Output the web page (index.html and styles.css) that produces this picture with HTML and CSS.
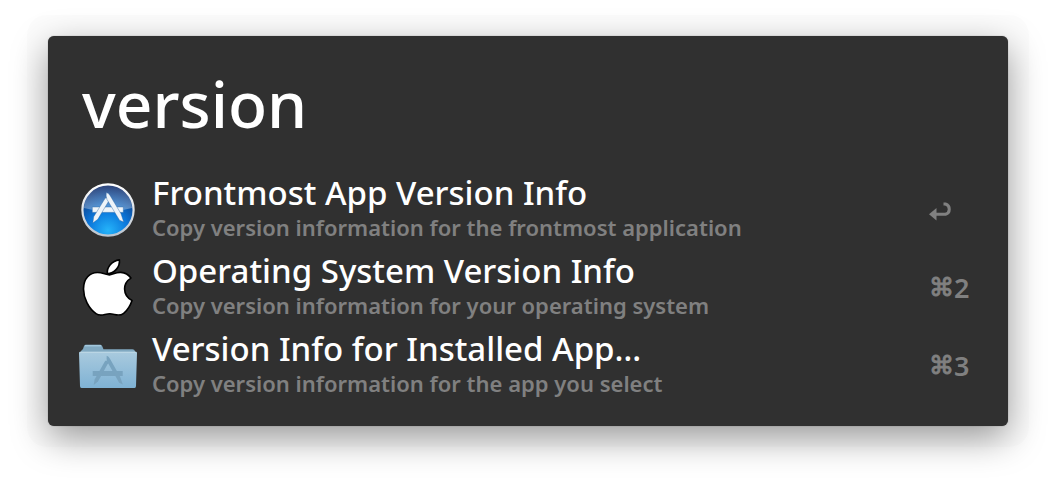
FILE: index.html
```html
<!DOCTYPE html>
<html lang="en">
<head>
<meta charset="utf-8">
<title>Launcher</title>
<link rel="stylesheet" href="styles.css">
</head>
<body>
<main class="launcher">
  <input class="query" type="text" value="version" aria-label="Search" spellcheck="false">
  <ul class="results">
    <li>
      <button class="result" type="button">
        <svg class="icon" viewBox="0 0 60 60" aria-hidden="true">
          <defs>
            <radialGradient id="blue" cx=".5" cy=".9" r=".85">
              <stop offset="0" stop-color="#25b4fa"/>
              <stop offset=".45" stop-color="#0b78dc"/>
              <stop offset="1" stop-color="#12306f"/>
            </radialGradient>
            <linearGradient id="gloss" x1="0" y1="0" x2="0" y2="1">
              <stop offset="0" stop-color="#fff" stop-opacity=".1"/>
              <stop offset="1" stop-color="#fff" stop-opacity=".34"/>
            </linearGradient>
            <linearGradient id="ring" x1="0" y1="0" x2="0" y2="1">
              <stop offset="0" stop-color="#fff"/>
              <stop offset="1" stop-color="#bcc5cf"/>
            </linearGradient>
          </defs>
          <circle cx="30" cy="30" r="25.6" fill="url(#blue)" stroke="url(#ring)" stroke-width="2.2"/>
          <path d="M6 28a24 24 0 0 1 48 0q-24 7-48 0z" fill="url(#gloss)"/>
          <g fill="#eef4f9" stroke="#23609f" stroke-width=".4">
            <path d="M14.300 27h31v5.400h-31z"/>
            <path d="M26.800 18.800q1-1.700 2.900-.7t1.200 2.700L19.800 39.300l-5 3.700.9-6.200z"/>
            <path d="M28.300 12.500q2.400.6 3.900 3.200l10.800 18.100 2.700 8.200-4.200-1.800-12.500-20.700q-1.400-3.500-.7-7z"/>
          </g>
        </svg>
        <span class="text">
          <span class="title">Frontmost App Version Info</span>
          <span class="subtitle">Copy version information for the frontmost application</span>
        </span>
        <kbd class="shortcut" aria-label="Return">
          <svg class="return" viewBox="0 0 24 22" aria-hidden="true">
            <path d="M6 15.300h10.500a5.400 5.400 0 0 0 0-10.300H14.500" fill="none" stroke="currentColor" stroke-width="3"/>
            <path d="M0 15.300l7.500-6.200v12.400z" fill="currentColor"/>
          </svg>
        </kbd>
      </button>
    </li>
    <li>
      <button class="result" type="button">
        <svg class="icon" viewBox="0 0 60 60" aria-hidden="true">
          <g transform="translate(.8 .8) scale(1.02)" fill="#fff" stroke="#000" stroke-width="1.6" stroke-linejoin="round">
            <path d="M30 15.700c3 0 6.200-2.800 11.200-2.400 4.200.3 7.700 2.400 9.900 5.600-4 2.500-6.300 6.200-6.200 10.800.1 5.300 2.700 9 7.300 11.100-1.700 5-4.700 9.800-8.200 12.600-4.800 3.800-8.700.5-13.600.5s-8.800 3.100-13.200.1C9.600 48.700 4.600 38.600 4.600 29.600c0-10.400 6.200-16.200 13.700-16.200 5 0 8.300 2.300 11.700 2.300z"/>
            <path d="M28 14.600c-.9-6.500 4.500-12.500 11.800-13.500.8 7.100-5 13.100-11.800 13.500z"/>
          </g>
        </svg>
        <span class="text">
          <span class="title">Operating System Version Info</span>
          <span class="subtitle">Copy version information for your operating system</span>
        </span>
        <kbd class="shortcut"><span class="cmd">⌘</span>2</kbd>
      </button>
    </li>
    <li>
      <button class="result" type="button">
        <svg class="icon" viewBox="0 0 60 60" aria-hidden="true">
          <defs>
            <linearGradient id="folder" x1="0" y1="0" x2="0" y2="1">
              <stop offset="0" stop-color="#a9cade"/>
              <stop offset="1" stop-color="#7fb2d4"/>
            </linearGradient>
          </defs>
          <path d="M3 19v-4l2-2 1-3q.5-1.300 2-1.300h14q1.500 0 2 1l1.500 3.500h29q2 0 2.500 2V19z" fill="#81a9c1"/>
          <path d="M7 9.700h16" stroke="#a2c7dc" stroke-width="1.500"/>
          <path d="M1 17q0-1.200 1.200-1.200h55.600q1.200 0 1.200 1.200l-1 33q0 2-1.500 2H3.500q-1.500 0-1.500-2z" fill="url(#folder)"/>
          <path d="M2 16.300h56" stroke="#bfd9e7" stroke-width="1"/>
          <g fill="#78a3bf">
            <path d="M14.700 35h30v5h-30z"/>
            <path d="M26.800 25.500q1-1.500 2.500-.6t.8 2.400L20 45.500l-4.300 3.600.9-5.500z"/>
            <path d="M28.700 19.800q2 .6 3.400 3.200l10 17.800 2.700 7.700-3.600-1.800-11.700-20.500q-1.400-3.500-.8-6.400z"/>
          </g>
        </svg>
        <span class="text">
          <span class="title">Version Info for Installed App…</span>
          <span class="subtitle">Copy version information for the app you select</span>
        </span>
        <kbd class="shortcut"><span class="cmd">⌘</span>3</kbd>
      </button>
    </li>
  </ul>
</main>
</body>
</html>
```
FILE: styles.css
```css
* {
  box-sizing: border-box;
}

body {
  margin: 0;
  padding: 36px 48px 60px;
  background: #fff;
  font-family: "Noto Sans", "Open Sans", sans-serif;
}

.launcher {
  padding: 24px 30px 21px;
  border-radius: 6px;
  background: #303030;
  box-shadow:
    0 0 1px rgba(0, 0, 0, 0.5),
    0 0 0 21px rgba(0, 0, 0, 0.01),
    0 12px 36px rgba(0, 0, 0, 0.4);
}

.query {
  display: block;
  width: 100%;
  height: 88px;
  margin: 0 0 23px;
  padding: 0 4px;
  border: 0;
  outline: 0;
  background: transparent;
  color: #fff;
  font: 500 64px/88px "Noto Sans", "Open Sans", sans-serif;
}

.results {
  margin: 0;
  padding: 0;
  list-style: none;
}

.result {
  display: flex;
  align-items: center;
  width: 100%;
  height: 78px;
  padding: 0;
  border: 0;
  background: transparent;
  color: #fff;
  font: inherit;
  text-align: left;
}

.icon {
  flex: none;
  width: 60px;
  height: 60px;
  margin-right: 14px;
  overflow: visible;
}

.text {
  flex: 1;
  min-width: 0;
  padding-bottom: 6px;
}

.title,
.subtitle {
  display: block;
  white-space: nowrap;
}

.title {
  font-size: 33px;
  font-weight: 500;
  line-height: 40px;
}

.subtitle {
  color: #808080;
  font-size: 22px;
  font-weight: 600;
  line-height: 28px;
}

.shortcut {
  display: flex;
  flex: none;
  align-items: center;
  width: 49px;
  color: #808080;
  font: 600 27px/36px "Noto Sans", "Open Sans", sans-serif;
}

.cmd {
  font-family: "DejaVu Sans", sans-serif;
  font-size: 25px;
  font-weight: 400;
  -webkit-text-stroke: 1px currentColor;
}

.return {
  width: 24px;
  height: 22px;
}
```
